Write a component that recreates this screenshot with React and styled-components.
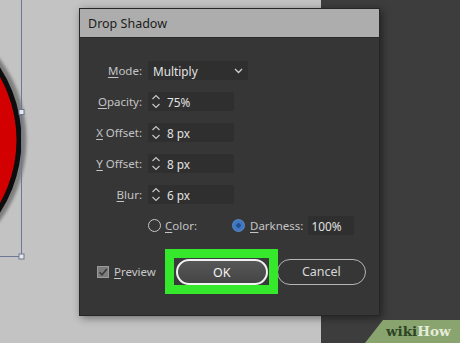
import styled, { createGlobalStyle } from 'styled-components';

const GlobalStyle = createGlobalStyle`
  html, body {
    margin: 0;
    padding: 0;
    background: #3c3c3c;
  }
  body {
    font-family: "Noto Sans", "Open Sans", sans-serif;
  }
`;

const Page = styled.div`
  position: relative;
  display: flex;
  width: 460px;
  height: 343px;
  overflow: hidden;
`;

const Canvas = styled.div`
  position: relative;
  width: 321px;
  background: #c3c3c3;
`;

const Panel = styled.div`
  flex: 1;
  background: #3d3d3d;
`;

const Artwork = styled.svg`
  position: absolute;
  left: 0;
  top: 0;
`;

const Dialog = styled.div`
  position: absolute;
  left: 79px;
  top: 8px;
  width: 301px;
  height: 308px;
  box-sizing: border-box;
  display: flex;
  flex-direction: column;
  background: #363636;
  border: 1px solid #262626;
  box-shadow: 2px 2px 8px rgba(0, 0, 0, 0.45);
`;

const TitleBar = styled.div`
  height: 29px;
  box-sizing: border-box;
  display: flex;
  align-items: center;
  padding-left: 8px;
  background: #adadad;
  border-bottom: 1px solid #2a2a2a;
  color: #1c1c1c;
  font-size: 12.5px;
`;

const Body = styled.div`
  display: flex;
  flex-direction: column;
  padding: 17px 0 0 0;
`;

const Row = styled.div`
  display: flex;
  align-items: center;
  height: 31px;
`;

const Label = styled.div`
  width: 62px;
  margin-right: 6px;
  text-align: right;
  color: #c4c4c4;
  font-size: 11.5px;
  white-space: nowrap;
`;

const Key = styled.span`
  text-decoration: underline;
  text-underline-offset: 2px;
`;

const Field = styled.div`
  display: flex;
  align-items: center;
  box-sizing: border-box;
  width: ${(p) => p.$w}px;
  height: 19px;
  padding-left: ${(p) => p.$pad || 4}px;
  background: #2f2f2f;
  border-radius: 2px;
  color: #e2e2e2;
  font-size: 11.8px;
`;

const Value = styled.span`
  flex: 1;
  margin-left: ${(p) => p.$ml || 0}px;
`;

const Chevron = styled.svg`
  margin-right: 5px;
`;

const Option = styled.label`
  display: flex;
  align-items: center;
  width: ${(p) => (p.$w ? `${p.$w}px` : 'auto')};
  color: #c4c4c4;
  font-size: 11.5px;
`;

const OptionText = styled.span`
  margin-right: ${(p) => p.$mr || 0}px;
`;

const RadioDot = styled.span`
  box-sizing: border-box;
  width: 13px;
  height: 13px;
  border-radius: 50%;
  margin-right: ${(p) => p.$mr}px;
  border: ${(p) => (p.$on ? '1px solid #5b8ccc' : '1.3px solid #c6c6c6')};
  background: ${(p) => (p.$on ? 'radial-gradient(circle, #1f4f8f 0 2px, #3f78c0 2.5px)' : 'transparent')};
`;

const ButtonRow = styled.div`
  display: flex;
  align-items: center;
  margin-top: 8px;
  padding-left: 17px;
`;

const Check = styled.span`
  display: flex;
  align-items: center;
  justify-content: center;
  box-sizing: border-box;
  width: 12px;
  height: 12px;
  background: #7c7c7c;
  border: 1px solid #9a9a9a;
  margin-right: 5px;
`;

const CheckLabel = styled.span`
  color: #c8c8c8;
  font-size: 11.5px;
  margin-right: 9px;
`;

const Highlight = styled.div`
  position: relative;
  z-index: 1;
  display: flex;
  border: 9px solid #35e82c;
  padding: 1px 1px 0 2px;
  background: #3a3a3a;
`;

const Pill = styled.button`
  box-sizing: border-box;
  width: ${(p) => p.$w}px;
  height: 26px;
  border-radius: 13px;
  font-family: inherit;
  font-size: 12.5px;
  color: ${(p) => (p.$primary ? '#f4f4f4' : '#d8d8d8')};
  border: ${(p) => (p.$primary ? '2px solid #f2f2f2' : '1px solid #b4b4b4')};
  background: ${(p) => (p.$primary ? 'linear-gradient(#575757, #454545)' : 'transparent')};
  margin-left: ${(p) => p.$ml || 0}px;
  padding: 0;
`;

const Watermark = styled.div`
  position: absolute;
  left: 365px;
  bottom: 0;
  width: 95px;
  height: 23px;
  box-sizing: border-box;
  padding: 3px 0 0 21px;
  background: #8aa46f;
  clip-path: polygon(18px 0, 100% 0, 100% 100%, 0 100%);
  font-family: "DejaVu Serif", serif;
  font-weight: bold;
  font-size: 13.5px;
  line-height: 16px;
  color: #2c4424;
`;

const Light = styled.span`
  color: #e4ecd9;
`;

const Spinner = () => (
  <svg width="10" height="17" viewBox="0 0 10 17" fill="none" stroke="#c6c6c6" strokeWidth="1.2">
    <polyline points="1.5,6 5,2.5 8.5,6" />
    <polyline points="1.5,11 5,14.5 8.5,11" />
  </svg>
);

const SpinRow = ({ label, k, value }) => (
  <Row>
    <Label>
      <Key>{k}</Key>
      {label}
    </Label>
    <Field $w={86} $pad={3}>
      <Spinner />
      <Value $ml={6}>{value}</Value>
    </Field>
  </Row>
);

export default function App() {
  return (
    <>
      <GlobalStyle />
      <Page>
        <Canvas>
          <Artwork width="80" height="343">
            <defs>
              <filter id="soft" x="-20%" y="-20%" width="140%" height="140%">
                <feGaussianBlur stdDeviation="1.4" />
              </filter>
            </defs>
            <circle cx="-110" cy="140" r="132" fill="none" stroke="#000" strokeWidth="9" opacity="0.35" filter="url(#soft)" />
            <circle cx="-112" cy="140" r="131" fill="#d20000" stroke="#0d0d0d" strokeWidth="5" />
            <line x1="21.5" y1="0" x2="21.5" y2="256" stroke="#6c7896" strokeWidth="1" />
            <line x1="0" y1="256.5" x2="21.5" y2="256.5" stroke="#6c7896" strokeWidth="1" />
            <rect x="19" y="109.5" width="5" height="5" fill="#e8e8e8" stroke="#6c7896" />
            <rect x="19" y="254" width="5" height="5" fill="#e8e8e8" stroke="#6c7896" />
          </Artwork>
        </Canvas>
        <Panel />
        <Dialog>
          <TitleBar>Drop Shadow</TitleBar>
          <Body>
            <Row>
              <Label>
                <Key>M</Key>ode:
              </Label>
              <Field $w={100} $pad={5}>
                <Value>Multiply</Value>
                <Chevron width="9" height="6" viewBox="0 0 9 6" fill="none" stroke="#d0d0d0" strokeWidth="1.3">
                  <polyline points="1,1 4.5,4.5 8,1" />
                </Chevron>
              </Field>
            </Row>
            <SpinRow k="O" label="pacity:" value="75%" />
            <SpinRow k="X" label=" Offset:" value="8 px" />
            <SpinRow k="Y" label=" Offset:" value="8 px" />
            <SpinRow k="B" label="lur:" value="6 px" />
            <Row>
              <Label />
              <Option $w={84}>
                <RadioDot $mr={4} />
                <OptionText>
                  <Key>C</Key>olor:
                </OptionText>
              </Option>
              <Option>
                <RadioDot $on $mr={5} />
                <OptionText $mr={5}>
                  <Key>D</Key>arkness:
                </OptionText>
                <Field $w={46} $pad={3}>
                  <Value>100%</Value>
                </Field>
              </Option>
            </Row>
            <ButtonRow>
              <Check>
                <svg width="10" height="10" viewBox="0 0 10 10" fill="none" stroke="#3a3a3a" strokeWidth="1.6">
                  <polyline points="1.5,5.2 4,7.8 8.8,2" />
                </svg>
              </Check>
              <CheckLabel>
                <Key>P</Key>review
              </CheckLabel>
              <Highlight>
                <Pill $primary $w={92}>OK</Pill>
              </Highlight>
              <Pill $w={89} $ml={-1}>Cancel</Pill>
            </ButtonRow>
          </Body>
        </Dialog>
        <Watermark>
          wiki<Light>How</Light>
        </Watermark>
      </Page>
    </>
  );
}
